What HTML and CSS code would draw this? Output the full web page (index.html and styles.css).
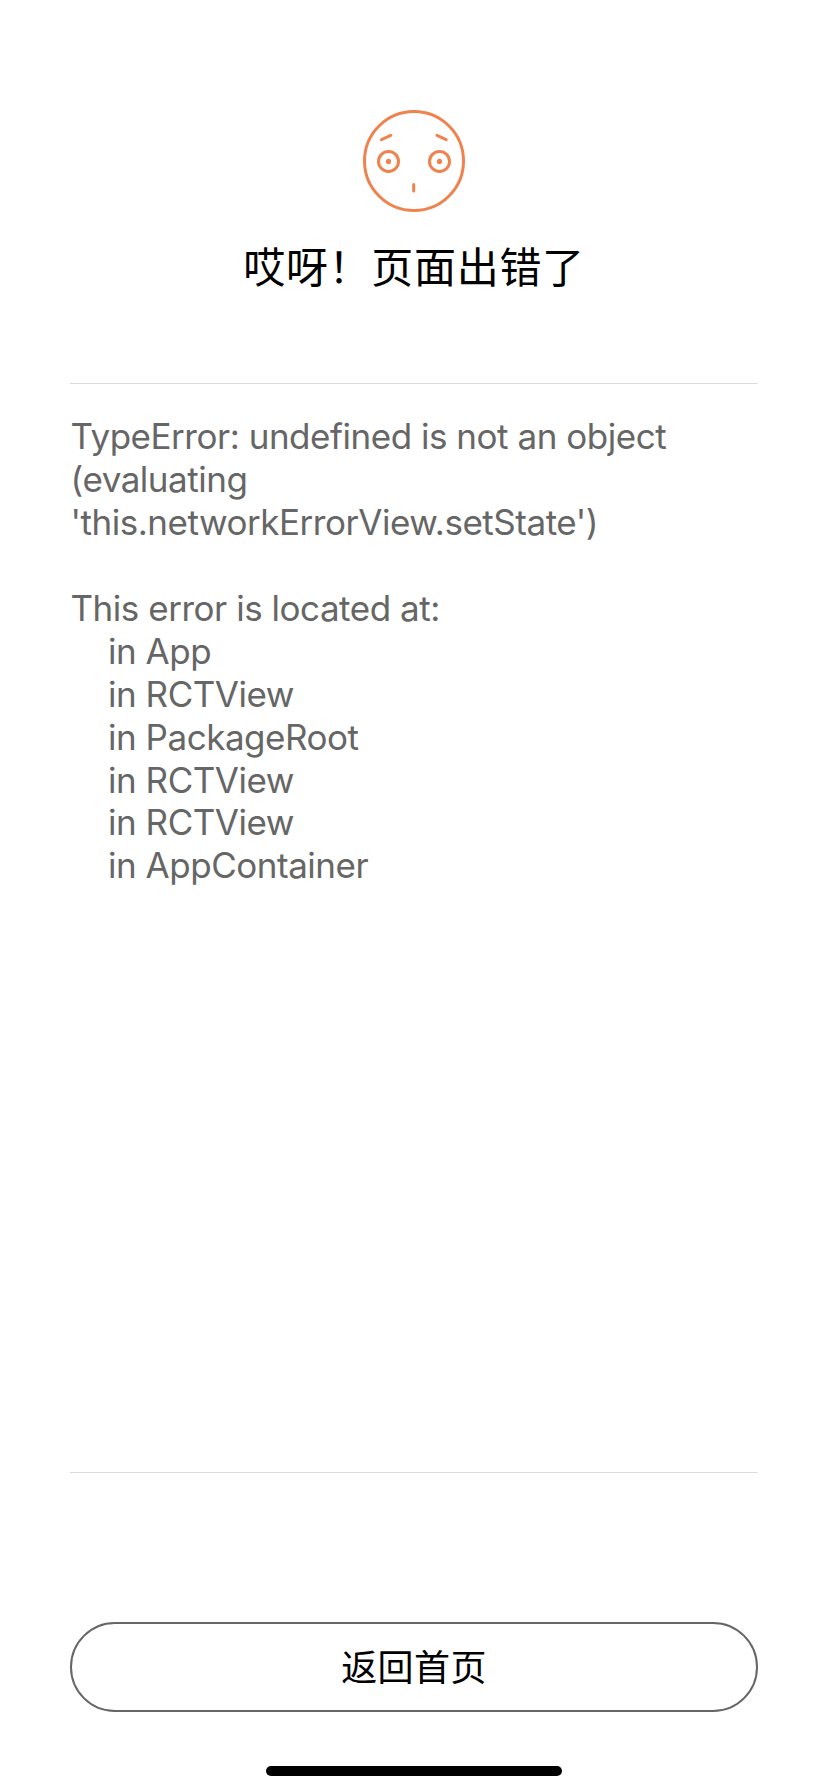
FILE: index.html
```html
<!DOCTYPE html>
<html lang="zh-CN">
<head>
<meta charset="utf-8">
<title>页面出错了</title>
<link rel="stylesheet" href="styles.css">
</head>
<body>
<main class="screen">
<svg class="face" viewBox="0 0 104 104" fill="none" stroke="#f0824e" stroke-width="3" stroke-linecap="round">
<circle cx="52" cy="52" r="49.5"/>
<circle cx="26.500" cy="52.400" r="10"/><circle cx="77.500" cy="52.400" r="10"/>
<circle cx="26.500" cy="52.400" r="2.600" fill="#f0824e" stroke="none"/><circle cx="77.500" cy="52.400" r="2.600" fill="#f0824e" stroke="none"/>
<path d="M19.500 30.600l9.200-4.200M75 26.400l9.200 4.200M51.700 75.500v6.500"/>
</svg>
<h1 class="title">哎呀！页面出错了</h1>
<pre class="trace">TypeError: undefined is not an object
(evaluating
'this.networkErrorView.setState')

This error is located at:
    in App
    in RCTView
    in PackageRoot
    in RCTView
    in RCTView
    in AppContainer</pre>
<button class="home">返回首页</button>
<div class="indicator"></div>
</main>
</body>
</html>
```
FILE: styles.css
```css
body{margin:0;background:#fff}
.screen{box-sizing:border-box;height:1792px;padding:109px 70px 0;display:flex;flex-direction:column;align-items:center}
.face{width:104px;height:104px;flex:none}
.title{margin:22px 0 0;height:60px;line-height:60px;font-size:42px;font-weight:400;letter-spacing:.7px;color:#000;font-family:"Noto Sans CJK SC",sans-serif}
.trace{box-sizing:border-box;width:688px;height:1090px;margin:88px 0 0;padding:31px 0 0 .5px;border-top:1px solid #ddd;border-bottom:1px solid #ddd;color:#666;font:400 35px/42.94px Inter,sans-serif;letter-spacing:-.47px}
.home{box-sizing:border-box;width:688px;height:90px;margin:149px 0 0;padding:0 0 5px;border:2px solid #666;border-radius:45px;background:#fff;color:#000;font:400 36px/50px "Noto Sans CJK SC",sans-serif;letter-spacing:.4px}
.indicator{width:296px;height:10px;margin-top:54px;border-radius:5px;background:#000}
```
